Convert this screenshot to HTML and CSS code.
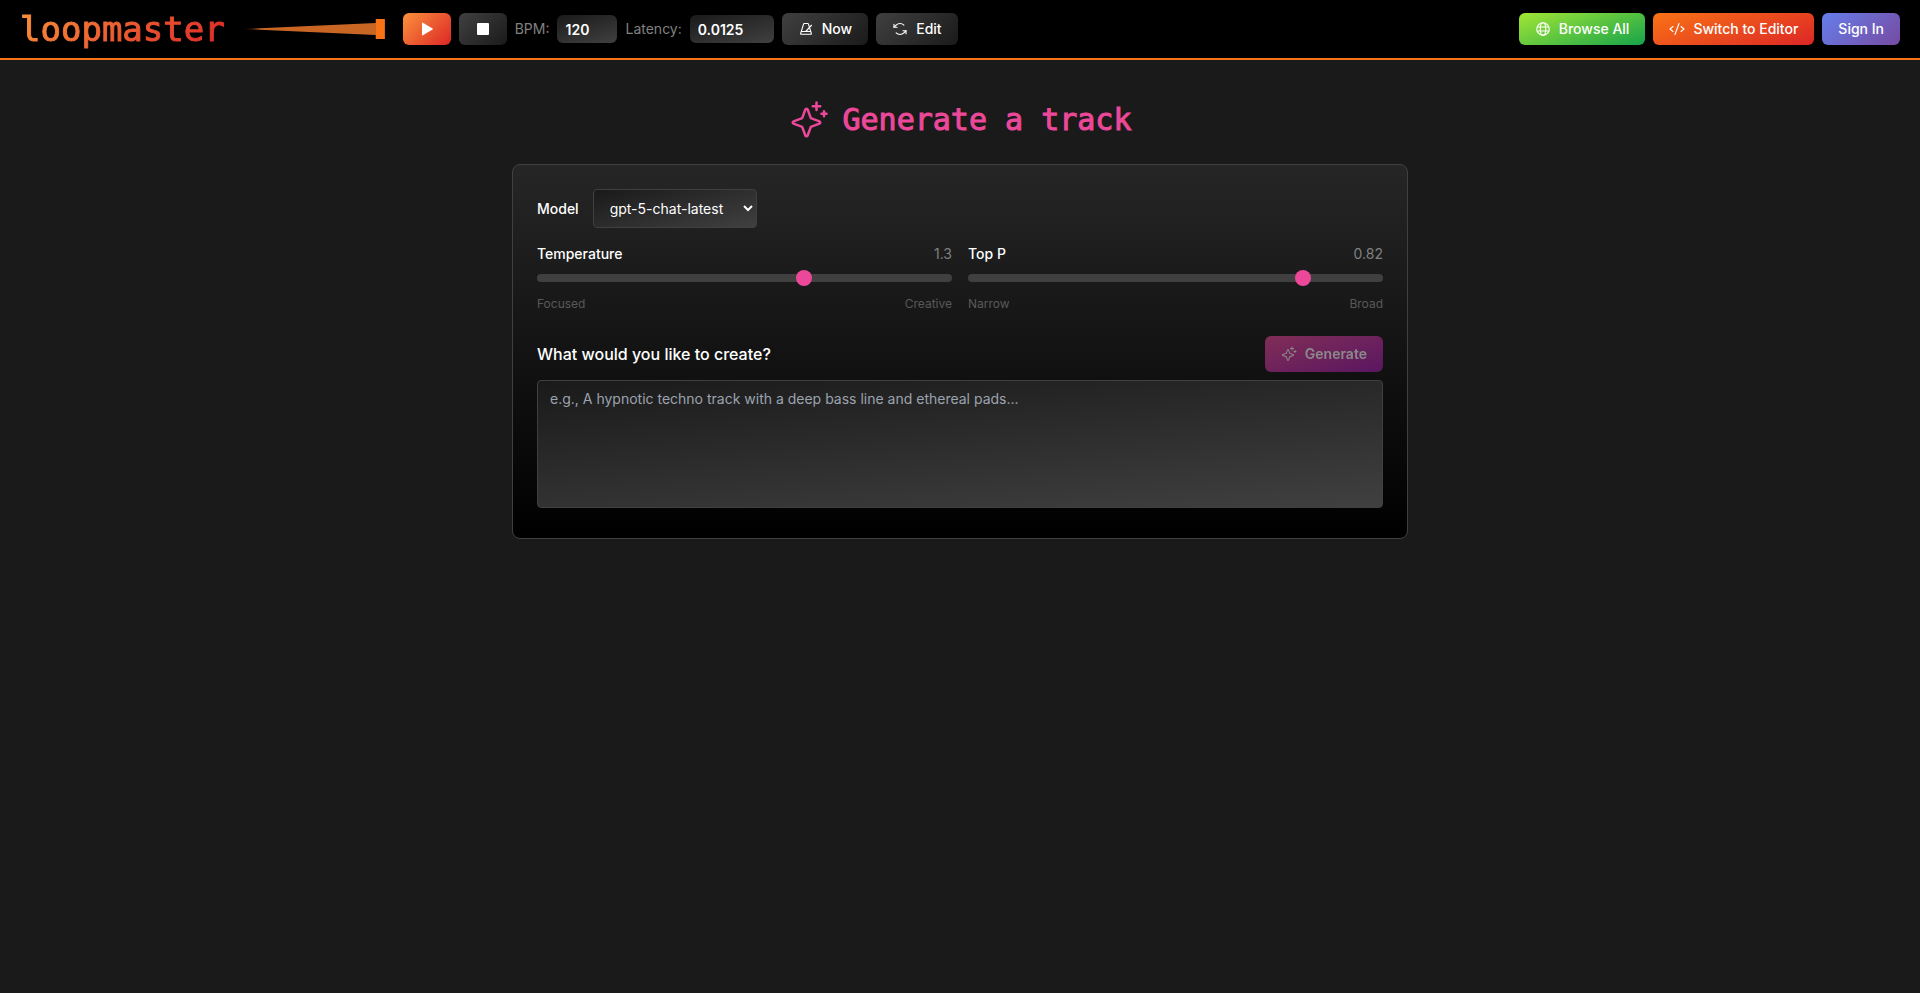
FILE: index.html
```html
<!DOCTYPE html>
<html lang="en">
<head>
    <meta charset="UTF-8">
    <meta name="viewport" content="width=device-width, initial-scale=1.0">
    <title>loopmaster</title>
    <link rel="stylesheet" href="styles.css">
</head>
<body>
    <header class="toolbar">
        <div class="toolbar-left">
            <a class="logo" href="#">loopmaster</a>
            <label class="volume" aria-label="Volume">
                <input type="range" min="0" max="1" step="0.01" value="1">
            </label>
            <div class="transport">
                <button class="btn btn-play" aria-label="Play">
                    <svg class="icon" viewBox="0 0 16 16"><path d="M3 2.2v11.6a.6.6 0 0 0 .9.5l9.6-5.8a.6.6 0 0 0 0-1L3.9 1.7a.6.6 0 0 0-.9.5z" fill="currentColor"/></svg>
                </button>
                <button class="btn btn-dark" aria-label="Stop">
                    <svg class="icon" viewBox="0 0 16 16"><rect x="2" y="2" width="12" height="12" rx="1" fill="currentColor"/></svg>
                </button>
                <label class="field-label" for="bpm">BPM:</label>
                <input class="field field-bpm" id="bpm" type="text" value="120">
                <label class="field-label" for="latency">Latency:</label>
                <input class="field field-latency" id="latency" type="text" value="0.0125">
                <button class="btn btn-dark">
                    <svg class="icon icon-line" viewBox="0 0 256 256">
                        <path d="M206 212H50a8 8 0 0 1-8-10L90 46a8 8 0 0 1 8-6h60a8 8 0 0 1 8 6l48 156a8 8 0 0 1-8 10z"/>
                        <path d="M54 168h148M124 168l92-100"/>
                    </svg>
                    Now
                </button>
                <button class="btn btn-dark">
                    <svg class="icon icon-line" viewBox="0 0 256 256">
                        <path d="M80 100H32V52"/>
                        <path d="M32 100l34-34a88 88 0 0 1 124 0"/>
                        <path d="M176 156h48v48"/>
                        <path d="M224 156l-34 34a88 88 0 0 1-124 0"/>
                    </svg>
                    Edit
                </button>
            </div>
        </div>
        <div class="toolbar-right">
            <button class="btn btn-browse">
                <svg class="icon icon-line" viewBox="0 0 256 256">
                    <circle cx="128" cy="128" r="100"/>
                    <ellipse cx="128" cy="128" rx="44" ry="100"/>
                    <path d="M36 96h184M36 160h184"/>
                </svg>
                Browse All
            </button>
            <button class="btn btn-editor">
                <svg class="icon icon-line" viewBox="0 0 256 256">
                    <path d="M64 88l-48 40 48 40M192 88l48 40-48 40M160 40L96 216"/>
                </svg>
                Switch to Editor
            </button>
            <button class="btn btn-signin">Sign In</button>
        </div>
    </header>

    <main class="page">
        <h1 class="page-title">
            <svg class="icon-title" viewBox="0 0 256 256">
                <path fill="currentColor" d="M197.58 129.06 146 110l-19-51.62a15.92 15.92 0 0 0-29.88 0L78 110l-51.62 19a15.92 15.92 0 0 0 0 29.88L78 178l19 51.62a15.92 15.92 0 0 0 29.88 0L146 178l51.62-19a15.92 15.92 0 0 0 0-29.88zM137 164.22a8 8 0 0 0-4.74 4.74L112 223.85 91.78 169a8 8 0 0 0-4.78-4.78L32.15 144 87 123.78a8 8 0 0 0 4.78-4.78L112 64.15 132.22 119a8 8 0 0 0 4.74 4.74L191.85 144zM144 40a8 8 0 0 1 8-8h16V16a8 8 0 0 1 16 0v16h16a8 8 0 0 1 0 16h-16v16a8 8 0 0 1-16 0V48h-16a8 8 0 0 1-8-8zM248 88a8 8 0 0 1-8 8h-8v8a8 8 0 0 1-16 0v-8h-8a8 8 0 0 1 0-16h8v-8a8 8 0 0 1 16 0v8h8a8 8 0 0 1 8 8z"/>
            </svg>
            Generate a track
        </h1>

        <form class="card">
            <div class="model-row">
                <label for="model">Model</label>
                <select id="model">
                    <option>gpt-5-chat-latest</option>
                </select>
            </div>

            <div class="sliders">
                <div class="slider">
                    <div class="slider-head">
                        <label for="temperature">Temperature</label>
                        <span class="slider-value">1.3</span>
                    </div>
                    <input id="temperature" type="range" min="0" max="2" step="0.01" value="1.3">
                    <div class="slider-hints"><span>Focused</span><span>Creative</span></div>
                </div>
                <div class="slider">
                    <div class="slider-head">
                        <label for="top-p">Top P</label>
                        <span class="slider-value">0.82</span>
                    </div>
                    <input id="top-p" type="range" min="0" max="1" step="0.01" value="0.82">
                    <div class="slider-hints"><span>Narrow</span><span>Broad</span></div>
                </div>
            </div>

            <div class="prompt-head">
                <label for="prompt">What would you like to create?</label>
                <button class="btn btn-generate" disabled>
                    <svg class="icon" viewBox="0 0 256 256">
                        <path fill="currentColor" d="M197.58 129.06 146 110l-19-51.62a15.92 15.92 0 0 0-29.88 0L78 110l-51.62 19a15.92 15.92 0 0 0 0 29.88L78 178l19 51.62a15.92 15.92 0 0 0 29.88 0L146 178l51.62-19a15.92 15.92 0 0 0 0-29.88zM137 164.22a8 8 0 0 0-4.74 4.74L112 223.85 91.78 169a8 8 0 0 0-4.78-4.78L32.15 144 87 123.78a8 8 0 0 0 4.78-4.78L112 64.15 132.22 119a8 8 0 0 0 4.74 4.74L191.85 144zM144 40a8 8 0 0 1 8-8h16V16a8 8 0 0 1 16 0v16h16a8 8 0 0 1 0 16h-16v16a8 8 0 0 1-16 0V48h-16a8 8 0 0 1-8-8zM248 88a8 8 0 0 1-8 8h-8v8a8 8 0 0 1-16 0v-8h-8a8 8 0 0 1 0-16h8v-8a8 8 0 0 1 16 0v8h8a8 8 0 0 1 8 8z"/>
                    </svg>
                    Generate
                </button>
            </div>
            <textarea id="prompt" placeholder="e.g., A hypnotic techno track with a deep bass line and ethereal pads..."></textarea>
        </form>
    </main>
</body>
</html>
```

FILE: styles.css
```css
* {
    box-sizing: border-box;
}

body {
    margin: 0;
    min-height: 100vh;
    background: #1a1a1a;
    color: #fff;
    font-family: Inter, 'Noto Sans', sans-serif;
    font-size: 14px;
    line-height: 20px;
}

button,
input,
select,
textarea {
    font: inherit;
    color: inherit;
}

/* Toolbar */
.toolbar {
    display: flex;
    justify-content: space-between;
    align-items: center;
    height: 60px;
    padding: 0 20px;
    background: #000;
    border-bottom: 2px solid #f97316;
}

.toolbar-left,
.toolbar-right,
.transport {
    display: flex;
    align-items: center;
    gap: 8px;
}

.toolbar-left {
    gap: 18px;
}

.logo {
    font-family: 'DejaVu Sans Mono', monospace;
    font-size: 34px;
    line-height: 40px;
    text-decoration: none;
    color: transparent;
    background: linear-gradient(135deg, #fb923c, #dc2626);
    background-clip: text;
    -webkit-background-clip: text;
    -webkit-text-stroke: 1px transparent;
}

.volume {
    display: flex;
}

.volume input {
    appearance: none;
    width: 142px;
    height: 20px;
    margin: 0;
    background: transparent;
}

/* wedge that grows towards the thumb */
.volume input::-webkit-slider-runnable-track {
    height: 20px;
    background: linear-gradient(to right, transparent, #c96624 12%);
    clip-path: polygon(0 50%, 133px 4px, 133px 0, 100% 0, 100% 100%, 133px 100%, 133px 16px);
}

.volume input::-webkit-slider-thumb {
    appearance: none;
    width: 9px;
    height: 20px;
    background: #f97316;
}

.btn {
    display: flex;
    align-items: center;
    justify-content: center;
    gap: 8px;
    height: 32px;
    padding: 0 16px;
    border: none;
    border-radius: 6px;
    font-weight: 500;
    cursor: pointer;
}

.btn-dark {
    background: linear-gradient(135deg, #404040, #1a1a1a);
}

.btn-play {
    background: linear-gradient(135deg, #fb923c, #dc2626);
}

.btn-browse {
    background: linear-gradient(160deg, #a3e635, #16a34a);
}

.btn-editor {
    background: linear-gradient(160deg, #f97316, #dc2626);
}

.btn-signin {
    background: linear-gradient(135deg, #667eea, #764ba2);
}

.icon {
    width: 16px;
    height: 16px;
}

.icon-line {
    fill: none;
    stroke: currentColor;
    stroke-width: 18;
    stroke-linecap: round;
    stroke-linejoin: round;
}

.field-label {
    color: #808080;
}

.field {
    height: 28px;
    padding: 0 8px;
    border: none;
    border-radius: 6px;
    background: linear-gradient(165deg, #1a1a1a, #404040);
    font-weight: 600;
}

.field-bpm {
    width: 60px;
}

.field-latency {
    width: 84px;
}

/* Generate page */
.page {
    max-width: 928px;
    margin: 0 auto;
    padding: 40px 16px;
}

.page-title {
    display: flex;
    align-items: center;
    justify-content: center;
    gap: 14px;
    margin: 0 0 24px;
    color: #ec4899;
    font-family: 'DejaVu Sans Mono', monospace;
    font-size: 30px;
    font-weight: normal;
    line-height: 40px;
    -webkit-text-stroke: 1px #ec4899;
}

.icon-title {
    width: 40px;
    height: 40px;
}

.card {
    padding: 24px;
    border: 1px solid #404040;
    border-radius: 8px;
    background: linear-gradient(to bottom, #262626, #000);
}

.card label {
    font-weight: 500;
}

.model-row {
    display: flex;
    align-items: center;
    gap: 14px;
    margin-bottom: 16px;
}

.model-row select {
    width: 164px;
    height: 39px;
    padding: 0 12px;
    border: 1px solid #404040;
    border-radius: 4px;
    background: linear-gradient(165deg, #1a1a1a, #404040);
}

.sliders {
    display: grid;
    grid-template-columns: 1fr 1fr;
    gap: 16px;
    margin-bottom: 22px;
}

.slider-head,
.slider-hints {
    display: flex;
    justify-content: space-between;
}

.slider-value {
    color: #808080;
}

.slider input {
    display: block;
    appearance: none;
    width: 100%;
    height: 8px;
    margin: 10px 0 12px;
    border-radius: 4px;
    background: #404040;
}

.slider input::-webkit-slider-thumb {
    appearance: none;
    width: 16px;
    height: 16px;
    border-radius: 50%;
    background: #ec4899;
}

.slider-hints {
    color: #595959;
    font-size: 12px;
    line-height: 20px;
}

.prompt-head {
    display: flex;
    justify-content: space-between;
    align-items: center;
    margin-bottom: 8px;
}

.prompt-head label {
    font-size: 16px;
}

.btn-generate {
    height: 36px;
    background: linear-gradient(160deg, #ec4899, #a21caf);
    font-weight: 600;
    opacity: 0.5;
}

.card textarea {
    display: block;
    width: 100%;
    height: 128px;
    margin-bottom: 6px;
    padding: 8px 12px;
    border: 1px solid #404040;
    border-radius: 4px;
    background: linear-gradient(175deg, #1a1a1a, #404040);
    resize: none;
}

.card textarea::placeholder {
    color: #9ca3af;
}
```
